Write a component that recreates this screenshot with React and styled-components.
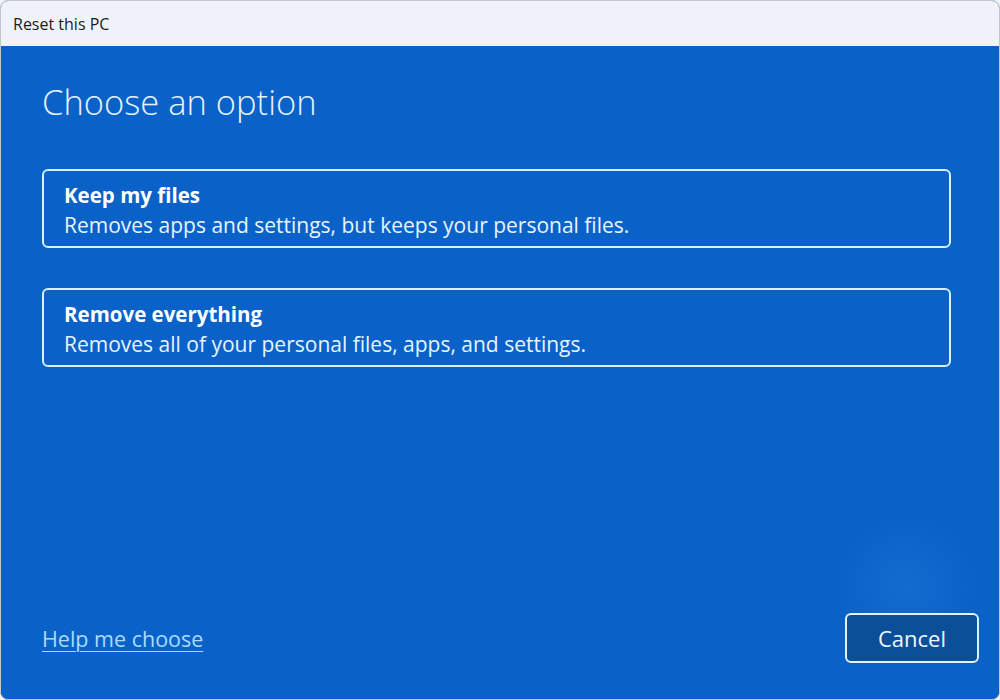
import React from 'react'
import styled, { createGlobalStyle } from 'styled-components'

const GlobalStyle = createGlobalStyle`
  html, body {
    margin: 0;
    padding: 0;
    background: #f3f3f3;
    font-family: 'Open Sans', 'Noto Sans', sans-serif;
  }
`

const options = [
  {
    title: 'Keep my files',
    text: 'Removes apps and settings, but keeps your personal files.'
  },
  {
    title: 'Remove everything',
    text: 'Removes all of your personal files, apps, and settings.'
  }
]

const App = () => (
  <>
    <GlobalStyle />
    <Window>
      <TitleBar>Reset this PC</TitleBar>
      <Body>
        <Heading>Choose an option</Heading>
        <Options>
          {options.map(o => (
            <Option key={o.title}>
              <OptionTitle>{o.title}</OptionTitle>
              <OptionText>{o.text}</OptionText>
            </Option>
          ))}
        </Options>
        <Footer>
          <HelpLink href="#">Help me choose</HelpLink>
          <CancelButton>Cancel</CancelButton>
        </Footer>
      </Body>
    </Window>
  </>
)

export default App

const Window = styled.div`
  display: flex;
  flex-direction: column;
  width: 1000px;
  height: 700px;
  box-sizing: border-box;
  border: 1px solid #c4c7cc;
  border-radius: 8px;
  overflow: hidden;
  background: #0a62c8;
`

const TitleBar = styled.div`
  display: flex;
  align-items: center;
  height: 45px;
  flex-shrink: 0;
  padding-left: 12px;
  background: #eff3f9;
  color: #1b1b1b;
  font-size: 16px;
`

const Body = styled.div`
  display: flex;
  flex-direction: column;
  flex: 1;
  padding: 30px 20px 36px 41px;
  background: radial-gradient(circle at 905px 540px, #126ccf 0, #0a62c8 70px);
`

const Heading = styled.h1`
  margin: 0 0 41px;
  font-size: 34.5px;
  font-weight: 300;
  color: #e4f4ff;
  line-height: 52px;
`

const Options = styled.div`
  display: flex;
  flex-direction: column;
  gap: 40px;
  width: 909px;
`

const Option = styled.div`
  display: flex;
  flex-direction: column;
  height: 79px;
  box-sizing: border-box;
  padding: 9px 20px 0;
  border: 2px solid #d6efff;
  border-radius: 6px;
  cursor: pointer;
`

const OptionTitle = styled.div`
  font-size: 20.5px;
  font-weight: 700;
  color: #ffffff;
  line-height: 30px;
`

const OptionText = styled.div`
  font-size: 21px;
  color: #e6f4ff;
  line-height: 30px;
`

const Footer = styled.div`
  display: flex;
  align-items: center;
  justify-content: space-between;
  margin-top: auto;
`

const HelpLink = styled.a`
  font-size: 21.5px;
  color: #a9dbff;
  text-decoration: underline;
  text-underline-offset: 4px;
  text-decoration-thickness: 1px;
  margin-top: 1px;
`

const CancelButton = styled.button`
  width: 134px;
  height: 50px;
  border: 2px solid #dff2ff;
  border-radius: 6px;
  background: #0b4f99;
  color: #eef8ff;
  font-family: 'Open Sans', 'Noto Sans', sans-serif;
  font-size: 22px;
  cursor: pointer;
`
